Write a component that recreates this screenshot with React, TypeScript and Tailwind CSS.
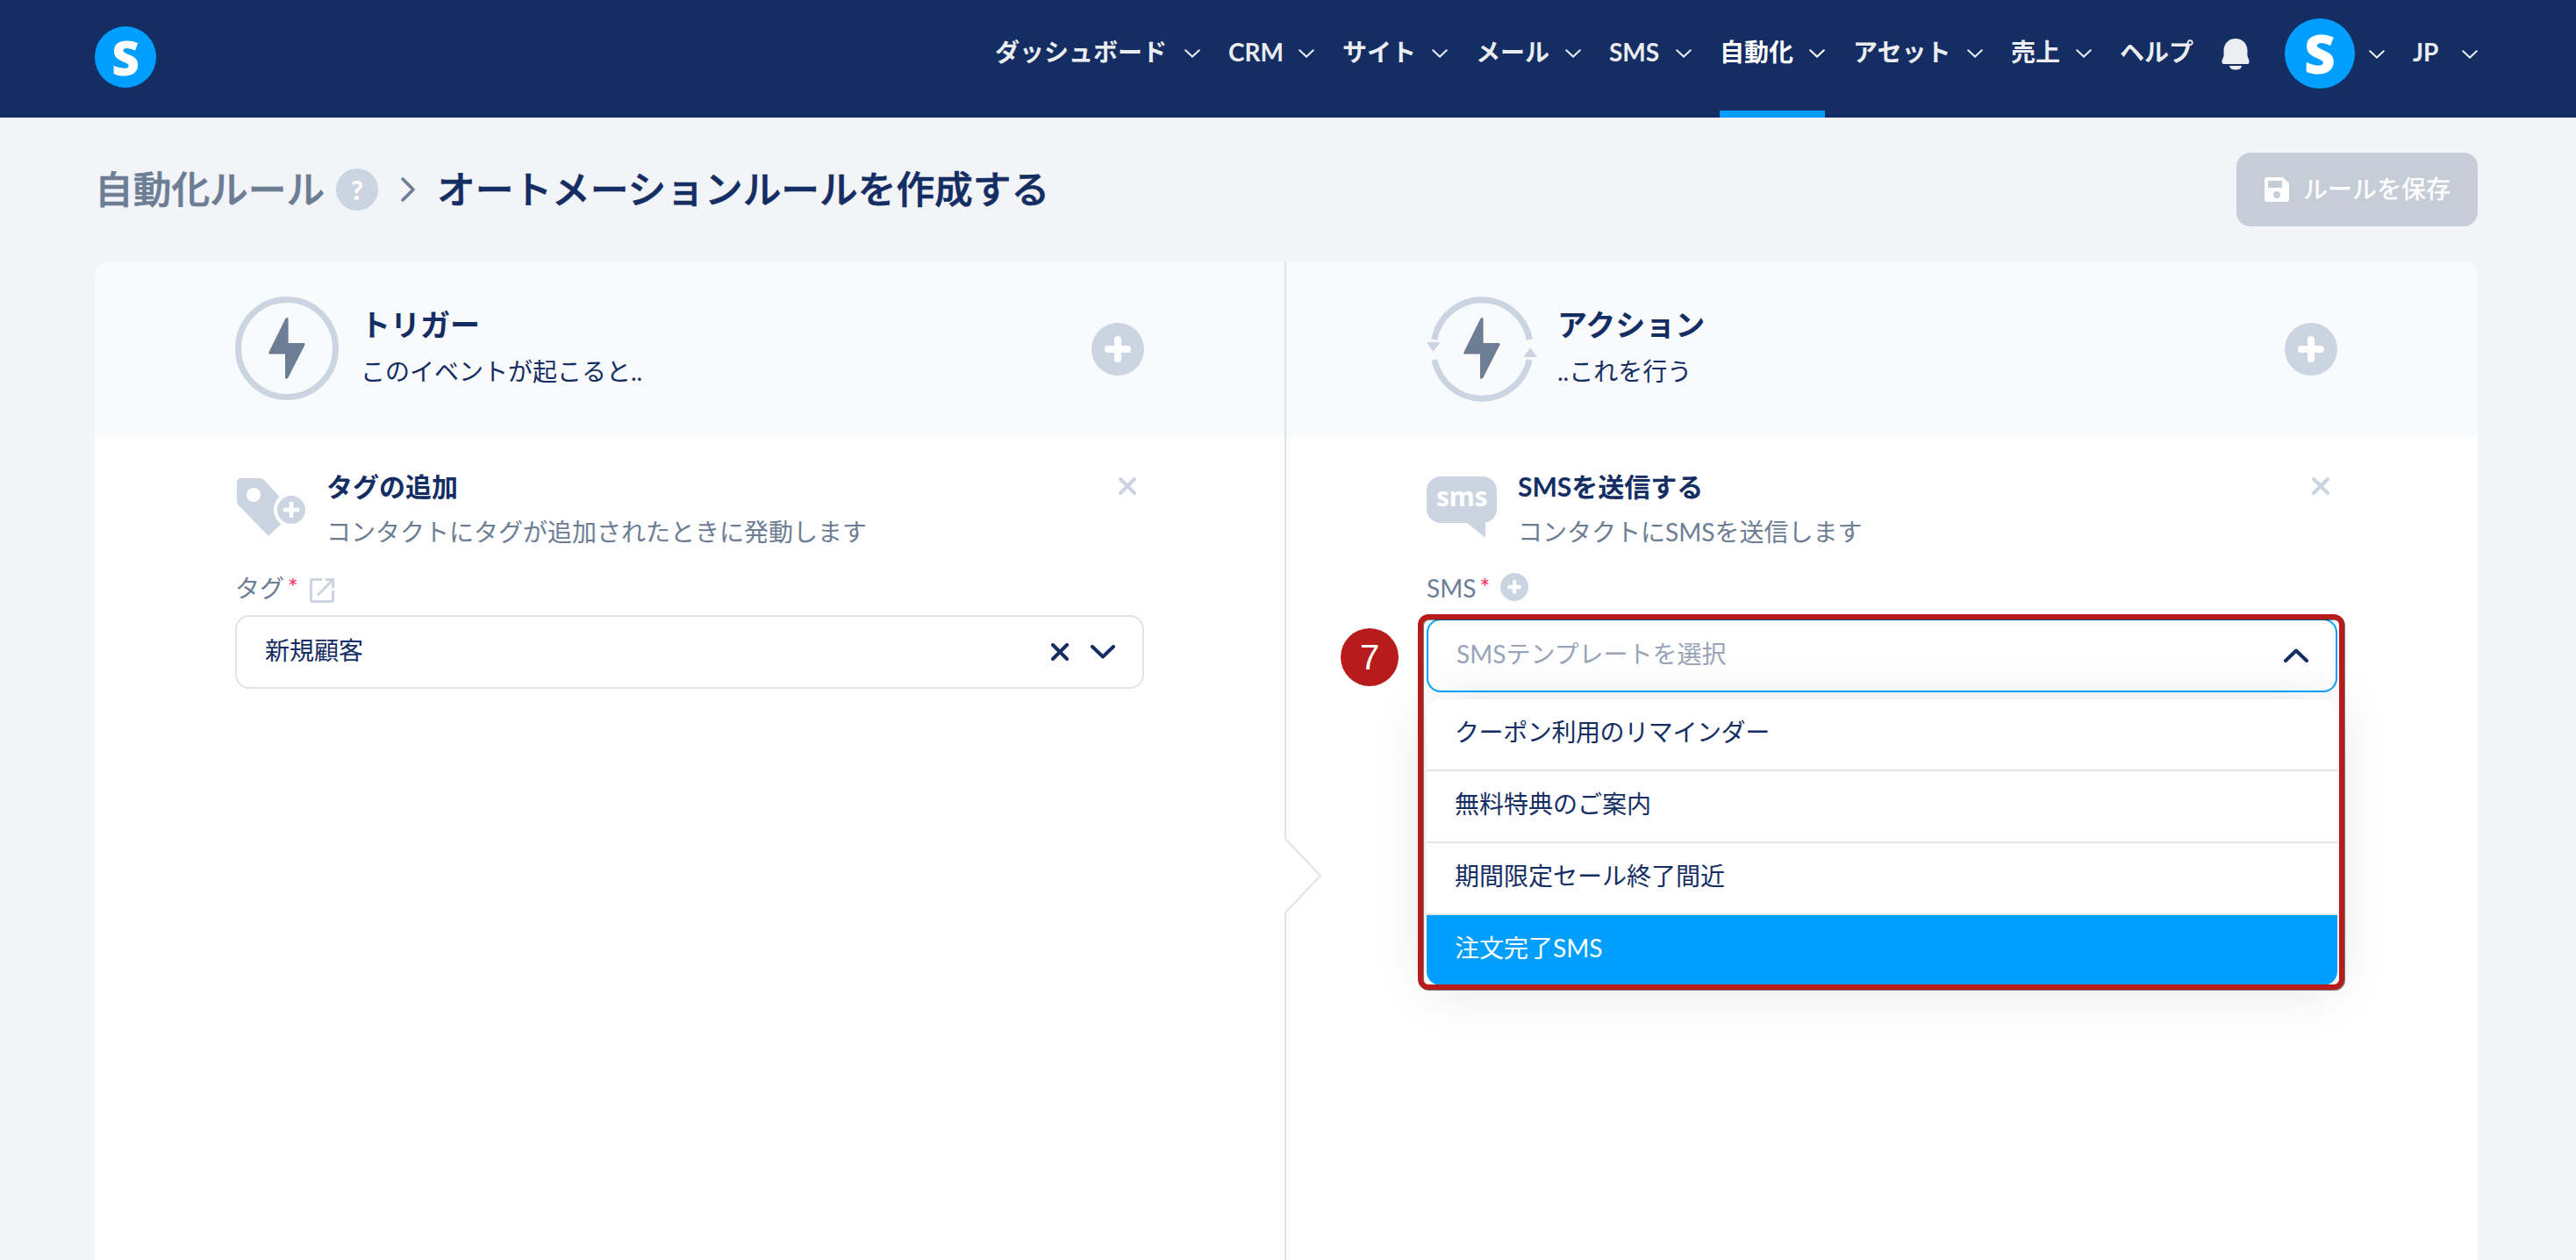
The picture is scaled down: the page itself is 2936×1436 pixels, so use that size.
import React from 'react';

interface NavItem {
  label: string;
  width: string;
  active?: boolean;
}

const navItems: NavItem[] = [
  { label: 'ダッシュボード', width: 'w-[234px]' },
  { label: 'CRM', width: 'w-[98px]' },
  { label: 'サイト', width: 'w-[120px]' },
  { label: 'メール', width: 'w-[120px]' },
  { label: 'SMS', width: 'w-[94px]' },
  { label: '自動化', width: 'w-[120px]', active: true },
  { label: 'アセット', width: 'w-[148px]' },
  { label: '売上', width: 'w-[92px]' },
];

const templates = ['クーポン利用のリマインダー', '無料特典のご案内', '期間限定セール終了間近', '注文完了SMS'];

const NavChevron = () => (
  <svg width="18" height="10" viewBox="0 0 18 10" fill="none" className="mt-0.5 shrink-0">
    <path d="M1.2 1.2 9 8.6l7.8-7.4" stroke="currentColor" strokeWidth="2" strokeLinecap="round" />
  </svg>
);

const boltPath =
  'M19.3 1.2Q22.6-1.6 22.6 2V29H40Q42.4 29 41.2 31.4L22.4 68.6Q19 71.6 19 68V41.5H1.6Q-.4 41.5.6 39Z';

const TriggerIcon = () => (
  <div className="flex size-[118px] items-center justify-center rounded-full border-[7px] border-[#cbd5e1]">
    <svg width="42" height="70" viewBox="0 0 42 70">
      <path d={boltPath} fill="#6d7d94" />
    </svg>
  </div>
);

const ActionIcon = () => (
  <svg width="126" height="120" viewBox="0 0 126 120" fill="none">
    <path d="M8.6 49A55.5 56.5 0 0 1 117.4 49M8.8 72A55.5 56.5 0 0 0 117.2 72" stroke="#cbd5e1" strokeWidth="7" />
    <path d="M0 52H15.5L7.7 63ZM110.5 69H126L118.3 58Z" fill="#cbd5e1" />
    <path transform="translate(42 24)" d={boltPath} fill="#6d7d94" />
  </svg>
);

const PlusCircle = ({ size }: { size: number }) => (
  <svg width={size} height={size} viewBox="0 0 60 60" className="shrink-0">
    <circle cx="30" cy="30" r="30" fill="#cbd5e1" />
    <path d="M30 19v22M19 30h22" stroke="#fff" strokeWidth="8" strokeLinecap="round" />
  </svg>
);

const CloseIcon = () => (
  <svg width="20" height="20" viewBox="0 0 20 20" className="shrink-0">
    <path d="M2 2l16 16M18 2 2 18" stroke="#cbd5e1" strokeWidth="4" strokeLinecap="round" />
  </svg>
);

const TagIcon = () => (
  <svg width="80" height="68" viewBox="0 0 80 68" className="mt-px ml-px">
    <path d="M6 1H27Q30 1 32 3L66 40 39 65Q37 67.5 35 65L3 32Q1 30 1 27V6Q1 1 6 1Z" fill="#cbd5e1" />
    <circle cx="20" cy="20" r="8" fill="#fff" />
    <circle cx="63" cy="37" r="20" fill="#fff" />
    <circle cx="63" cy="37" r="16" fill="#cbd5e1" />
    <path d="M63 28v18M54 37h18" stroke="#fff" strokeWidth="4.5" />
  </svg>
);

const SmsIcon = () => (
  <div className="relative h-[70px] w-20">
    <svg width="80" height="70" viewBox="0 0 80 70" className="absolute inset-0">
      <path d="M16 0H64A16 16 0 0 1 80 16V37A16 16 0 0 1 67 52.6V70L46 53H16A16 16 0 0 1 0 37V16A16 16 0 0 1 16 0Z" fill="#cbd5e1" />
    </svg>
    <span className="relative block pt-[3px] text-center font-['Open_Sans'] text-[30px] leading-[40px] font-bold tracking-[-0.5px] text-white">
      sms
    </span>
  </div>
);

interface ColumnHeaderProps {
  icon: React.ReactNode;
  title: string;
  subtitle: string;
  iconWidth: string;
}

const ColumnHeader: React.FC<ColumnHeaderProps> = ({ icon, title, subtitle, iconWidth }) => (
  <div className="flex h-[200px] items-center bg-[#f9fafc] px-40">
    <div className={`flex h-[120px] shrink-0 items-start ${iconWidth}`}>{icon}</div>
    <div className="flex-1 pb-[3px]">
      <h2 className="text-[34px] leading-[48px] font-bold">{title}</h2>
      <p className="mt-[5px] text-[28px] leading-[48px]">{subtitle}</p>
    </div>
    <PlusCircle size={60} />
  </div>
);

interface CardHeaderProps {
  icon: React.ReactNode;
  title: string;
  description: string;
}

const CardHeader: React.FC<CardHeaderProps> = ({ icon, title, description }) => (
  <div className="flex h-[140px] pt-9">
    <div className="w-[104px] shrink-0 pt-[9px]">{icon}</div>
    <div className="-mt-0.5 flex-1">
      <h3 className="text-[30px] leading-[44px] font-bold">{title}</h3>
      <p className="mt-2 text-[28px] leading-[44px] text-[#6d7d94]">{description}</p>
    </div>
    <div className="pt-2.5 pr-[9px]">
      <CloseIcon />
    </div>
  </div>
);

const Header = () => (
  <header className="flex h-[134px] justify-between bg-[#142d63] pr-[112px] pl-[108px] text-[#ebedf1]">
    <div className="mt-[30px] flex size-[70px] items-center justify-center rounded-full bg-[#009fff]">
      <span className="pb-0.5 font-['Open_Sans'] text-[55px] leading-none font-extrabold text-white">S</span>
    </div>
    <nav className="flex text-[28px] leading-[40px] font-bold">
      <div className="flex gap-8">
        {navItems.map((item) => (
          <div
            key={item.label}
            className={`flex items-center justify-between border-b-8 pb-1.5 whitespace-nowrap ${item.width} ${
              item.active ? 'border-[#009fff] text-white' : 'border-transparent'
            }`}
          >
            <span className="pb-0.5">{item.label}</span>
            <NavChevron />
          </div>
        ))}
        <div className="flex w-[84px] items-center border-b-8 border-transparent pb-2 whitespace-nowrap">ヘルプ</div>
      </div>
      <div className="flex h-[122px] items-center">
        {/* Notifications */}
        <svg width="32" height="36" viewBox="0 0 32 36" fill="currentColor" className="mt-px ml-8">
          <path d="M16 0C24 0 29 5.5 29.5 13V20L31.5 25V27Q31.5 29 29.5 29H2.5Q.5 29 .5 27V25L2.500 20V13C3 5.5 8 0 16 0Z" />
          <path d="M9 31H23Q22.5 35.5 16 35.500 9.500 35.500 9 31Z" />
        </svg>
        <div className="mr-4 ml-10 flex size-20 items-center justify-center rounded-full bg-[#009fff]">
          <span className="pb-0.5 font-['Open_Sans'] text-[62px] leading-none font-extrabold text-white">S</span>
        </div>
        <NavChevron />
        <span className="ml-8 w-14 pb-1">JP</span>
        <NavChevron />
      </div>
    </nav>
  </header>
);

const Breadcrumb = () => (
  <div className="flex h-[164px] items-center justify-between pr-[112px] pl-[108px]">
    <div className="flex items-center text-[43.7px] leading-[60px] font-medium">
      <span className="w-[275px] pb-0.5 whitespace-nowrap text-[#6d7d94] [-webkit-text-stroke:0.7px]">
        自動化ルール
      </span>
      <span className="flex size-12 items-center justify-center rounded-full bg-[#cbd5e1] font-['Lato'] text-[30px] leading-none font-black text-white">
        ?
      </span>
      <svg width="16" height="28" viewBox="0 0 16 28" fill="none" className="mr-[25px] ml-[26px]">
        <path d="M2 2 14 14 2 26" stroke="#6d7d94" strokeWidth="3.5" strokeLinecap="round" strokeLinejoin="round" />
      </svg>
      <h1 className="pb-0.5 whitespace-nowrap [-webkit-text-stroke:0.7px]">オートメーションルールを作成する</h1>
    </div>
    <button className="flex h-[84px] w-[275px] items-center rounded-2xl bg-[#c6cdd7] pl-8 text-[28px] font-medium text-white">
      <svg width="28" height="28" viewBox="0 0 28 28" className="mr-4 shrink-0">
        <path
          fillRule="evenodd"
          d="M3 0H21L28 7V25A3 3 0 0 1 25 28H3A3 3 0 0 1 0 25V3A3 3 0 0 1 3 0ZM4 4V12H20V4ZM14 16A4 4 0 1 0 14 24 4 4 0 1 0 14 16Z"
          fill="#fff"
        />
      </svg>
      <span className="pb-0.5">ルールを保存</span>
    </button>
  </div>
);

const TriggerColumn = () => (
  <section className="relative w-[1358px] shrink-0 border-r-2 border-[#dfe4e7]">
    <ColumnHeader
      icon={<TriggerIcon />}
      title="トリガー"
      subtitle="このイベントが起こると.."
      iconWidth="w-[143px]"
    />
    <div className="px-40">
      <CardHeader icon={<TagIcon />} title="タグの追加" description="コンタクトにタグが追加されたときに発動します" />
      <div className="flex h-[63px] items-center text-[28px] text-[#6d7d94]">
        <span>タグ</span>
        <span className="ml-1 text-[#ff3366]">*</span>
        <svg width="28" height="28" viewBox="0 0 28 28" fill="none" className="mt-1.5 ml-[13px]">
          <path
            d="M14 1.5H3Q1.5 1.5 1.5 3V25Q1.5 26.5 3 26.5H25Q26.5 26.5 26.5 25V14M18 1.5H26.5V11M26 2 9 19.5"
            stroke="#cbd5e1"
            strokeWidth="3"
          />
        </svg>
      </div>
      <div className="flex h-[84px] items-center rounded-2xl border-2 border-[#dfe4e7] pr-[31px] pl-8 text-[28px]">
        <span className="flex-1 pb-[5px]">新規顧客</span>
        <svg width="20" height="20" viewBox="0 0 20 20">
          <path d="M2 2l16 16M18 2 2 18" stroke="#142d63" strokeWidth="4" strokeLinecap="round" />
        </svg>
        <svg width="28" height="16" viewBox="0 0 28 16" fill="none" className="ml-[25px]">
          <path d="M2 2 14 13.5 26 2" stroke="#142d63" strokeWidth="4" strokeLinecap="round" strokeLinejoin="round" />
        </svg>
      </div>
    </div>
    {/* Arrow pointing at the action column */}
    <svg width="44" height="84" viewBox="0 0 44 84" className="absolute top-[658px] -right-[44px]">
      <path d="M0 0H2V1L41 42 2 83V84H0Z" fill="#fff" />
      <path d="M1 0 41 42 1 84" stroke="#dfe4e7" strokeWidth="2" fill="none" />
    </svg>
    <div className="absolute top-[659px] -right-0.5 h-[82px] w-0.5 bg-white" />
  </section>
);

const ActionColumn = () => (
  <section className="w-[1358px] shrink-0">
    <ColumnHeader icon={<ActionIcon />} title="アクション" subtitle="..これを行う" iconWidth="w-[149px]" />
    <div className="px-40">
      <CardHeader icon={<SmsIcon />} title="SMSを送信する" description="コンタクトにSMSを送信します" />
      <div className="flex h-[67px] items-center pb-1 text-[28px] text-[#6d7d94]">
        <span>SMS</span>
        <span className="ml-1 text-[#ff3366]">*</span>
        <span className="ml-3 pb-0.5">
          <PlusCircle size={32} />
        </span>
      </div>
      <div className="relative text-[28px]">
        <div className="flex h-[84px] items-center rounded-2xl border-2 border-[#009fff] pr-[31px] pl-8">
          <span className="flex-1 pb-[5px] text-[#99a4b8]">SMSテンプレートを選択</span>
          <svg width="28" height="16" viewBox="0 0 28 16" fill="none">
            <path d="M2 14 14 2.5 26 14" stroke="#142d63" strokeWidth="4" strokeLinecap="round" strokeLinejoin="round" />
          </svg>
        </div>
        <ul className="relative mt-2 overflow-hidden rounded-2xl bg-white shadow-[0_4px_64px_rgba(0,0,0,0.11)]">
          {templates.map((name, index) => (
            <li
              key={name}
              className={`flex items-center px-8 pb-1.5 first:tracking-[-0.4px] ${
                index === templates.length - 1
                  ? 'h-[80px] bg-[#009fff] text-white'
                  : 'h-[82px] border-b-2 border-[#dfe4e7]'
              }`}
            >
              {name}
            </li>
          ))}
        </ul>
        {/* Step callout */}
        <div className="absolute -top-[5px] -left-2.5 h-[428px] w-[1056px] rounded-xl border-[6px] border-[#b71b1b] drop-shadow-[1px_1px_0_rgba(0,0,0,0.5)]" />
        <div className="absolute top-[11px] -left-[98px] flex size-[66px] items-center justify-center rounded-full bg-[#b71b1b] font-['Liberation_Sans'] text-[40px] leading-none text-white">
          7
        </div>
      </div>
    </div>
  </section>
);

export default function App() {
  return (
    <div
      lang="ja"
      className="flex h-[1436px] w-[2936px] flex-col overflow-hidden bg-[#f2f4f8] font-[Lato,'Noto_Sans_CJK_JP',sans-serif] text-[#142d63]"
    >
      <Header />
      <Breadcrumb />
      <main className="mx-[108px] flex w-[2716px] flex-1 overflow-hidden rounded-t-2xl bg-white">
        <TriggerColumn />
        <ActionColumn />
      </main>
    </div>
  );
}
